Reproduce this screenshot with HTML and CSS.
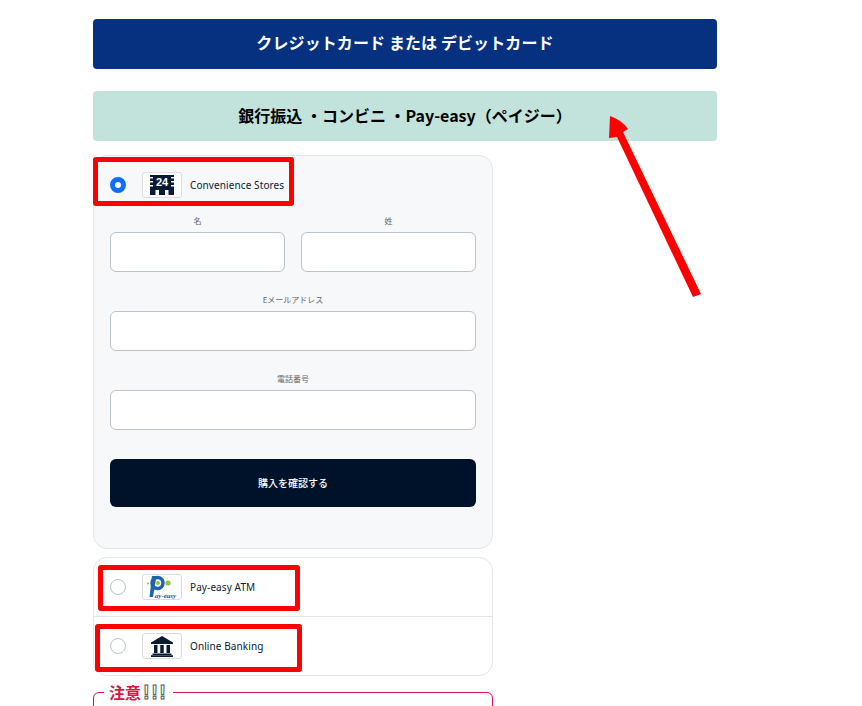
FILE: index.html
```html
<!DOCTYPE html>
<html lang="ja">
<head>
    <meta charset="UTF-8">
    <meta name="viewport" content="width=device-width, initial-scale=1.0">
    <title>お支払い方法</title>
    <link rel="stylesheet" href="styles.css">
</head>
<body>
    <div class="page">
        <div class="tab tab-card">クレジットカード または デビットカード</div>
        <div class="tab tab-bank">銀行振込 ・コンビニ ・Pay-easy（ペイジー）</div>

        <div class="method-box method-open">
            <div class="method-row">
                <span class="radio radio-on"></span>
                <span class="method-logo">
                    <svg width="24" height="20" viewBox="0 0 24 20">
                        <path fill="#0b1a33" d="M0 0h24v20h-5.500v-5h-3.500v5H9v-5H5.500v5H0z"/>
                        <text class="logo-24" x="12" y="10.500" text-anchor="middle">24</text>
                        <path fill="#fff" d="M0 2h3v1.500H0zM0 6h3v1.500H0zM0 10h3v1.500H0zM21 2h3v1.500h-3zM21 6h3v1.500h-3zM21 10h3v1.500h-3z"/>
                    </svg>
                </span>
                <span class="method-name">Convenience Stores</span>
            </div>
            <div class="form">
                <div class="form-pair">
                    <div class="field">
                        <label class="field-label">名</label>
                        <input class="field-input" type="text">
                    </div>
                    <div class="field">
                        <label class="field-label">姓</label>
                        <input class="field-input" type="text">
                    </div>
                </div>
                <div class="field">
                    <label class="field-label">Eメールアドレス</label>
                    <input class="field-input" type="text">
                </div>
                <div class="field">
                    <label class="field-label">電話番号</label>
                    <input class="field-input" type="text">
                </div>
                <button class="confirm" type="button">購入を確認する</button>
            </div>
        </div>

        <div class="method-box method-list">
            <div class="method-row">
                <span class="radio"></span>
                <span class="method-logo">
                    <svg width="38" height="24" viewBox="0 0 38 24">
                        <circle cx="14.500" cy="8" r="5.500" fill="none" stroke="#1d63ad" stroke-width="3.500"/>
                        <path fill="#1d63ad" d="M9 1h4.500L10 22H6.500z"/>
                        <circle cx="15" cy="8" r="2" fill="#8cc63f"/>
                        <circle cx="25" cy="8" r="2.600" fill="#8cc63f"/>
                        <circle cx="5" cy="8.500" r="1" fill="#8cc63f"/>
                        <text class="logo-payeasy" x="22.500" y="22.500" text-anchor="middle">ay-easy</text>
                    </svg>
                </span>
                <span class="method-name">Pay-easy ATM</span>
            </div>
            <div class="method-row">
                <span class="radio"></span>
                <span class="method-logo">
                    <svg width="22" height="21" viewBox="0 0 22 21">
                        <path fill="#0b1a33" d="M11 0l11 6.500V8H0V6.500zM3 9h3.500v8H3zM9.250 9h3.500v8h-3.500zM15.500 9H19v8h-3.500zM1.500 17.500h19V19h-19zM0 19.200h22V21H0z"/>
                    </svg>
                </span>
                <span class="method-name">Online Banking</span>
            </div>
        </div>

        <fieldset class="notice">
            <legend class="notice-title">注意<span class="notice-marks">!!!</span></legend>
        </fieldset>
    </div>

    <!-- annotations drawn over the screenshot -->
    <div class="mark mark-store"></div>
    <div class="mark mark-atm"></div>
    <div class="mark mark-online"></div>
    <svg class="arrow" width="862" height="706" viewBox="0 0 862 706">
        <path fill="#ff0000" d="M610 116Q622 120 628 129L623 132L701 294L693 297L617 137L609 138Z"/>
    </svg>
</body>
</html>
```
FILE: styles.css
```css
html, body {
    margin: 0;
    height: 706px;
    overflow: hidden;
    background: #fff;
}
body {
    font-family: "Noto Sans CJK JP", "Noto Sans", sans-serif;
    position: relative;
}
.page {
    box-sizing: border-box;
    width: 624px;
    height: 706px;
    overflow: hidden;
    margin-left: 93px;
    padding-top: 19px;
}
.tab {
    height: 50px;
    border-radius: 4px;
    text-align: center;
    font-size: 16px;
    font-weight: 700;
}
.tab-card {
    line-height: 47px;
    letter-spacing: 0.1px;
    background: #063180;
    color: #fff;
    margin-bottom: 22px;
}
.tab-bank {
    line-height: 49px;
    background: #c2e3dc;
    color: #000;
    margin-bottom: 14px;
}
.method-box {
    box-sizing: border-box;
    width: 400px;
    border: 1px solid #e3e6e8;
    border-radius: 14px;
}
.method-open {
    height: 394px;
    background: #f7f8fa;
    margin-bottom: 8px;
}
.method-list {
    height: 119px;
    margin-bottom: 6px;
}
.method-row {
    display: flex;
    align-items: center;
    height: 58px;
    padding-left: 16px;
}
.method-list .method-row + .method-row {
    border-top: 1px solid #e3e6e8;
}
.radio {
    box-sizing: border-box;
    width: 16px;
    height: 16px;
    border: 1px solid #b9c4cc;
    border-radius: 50%;
    background: #fff;
    margin-right: 16px;
}
.radio-on {
    border: 5px solid #0d6efd;
}
.method-logo {
    box-sizing: border-box;
    display: flex;
    align-items: center;
    justify-content: center;
    width: 40px;
    height: 26px;
    border: 1px solid #d9dde0;
    border-radius: 3px;
    background: #fff;
    margin-right: 8px;
}
.method-name {
    font-family: "Noto Sans", sans-serif;
    font-size: 10px;
    letter-spacing: 0.1px;
    color: #0b1a33;
}
.logo-24 {
    font-family: "Liberation Sans", sans-serif;
    font-size: 11px;
    font-weight: 700;
    fill: #fff;
}
.logo-payeasy {
    font-family: "Liberation Serif", serif;
    font-size: 7px;
    font-weight: 700;
    font-style: italic;
    fill: #1d4f8f;
}
.form {
    padding: 0 16px;
}
.form-pair {
    display: flex;
    gap: 16px;
}
.form-pair .field {
    flex: 1;
}
.field {
    margin-bottom: 21px;
}
.field-label {
    display: block;
    height: 18px;
    line-height: 13px;
    text-align: center;
    font-size: 8px;
    color: #5f686f;
}
.field-input {
    box-sizing: border-box;
    display: block;
    width: 100%;
    height: 40px;
    border: 1px solid #b9c4cc;
    border-radius: 6px;
    background: #fff;
}
.confirm {
    display: block;
    width: 100%;
    height: 48px;
    margin-top: 29px;
    padding: 0 0 2px;
    border: 0;
    border-radius: 6px;
    background: #001229;
    color: #fff;
    font-family: inherit;
    font-size: 10px;
    font-weight: 500;
}
.notice {
    box-sizing: border-box;
    width: 400px;
    height: 60px;
    margin: 0;
    padding: 0 10px;
    border: 1px solid #dc1446;
    border-radius: 6px;
}
.notice-title {
    margin-left: 0;
    padding: 0 5px;
    font-size: 16px;
    font-weight: 700;
    line-height: 20px;
    color: #dc1446;
}
.notice-marks {
    font-family: "Liberation Sans", sans-serif;
    font-size: 20px;
    font-weight: 700;
    letter-spacing: 1.500px;
    margin-left: 2px;
    color: #fff;
    -webkit-text-stroke: 1px #5a5a5a;
}
.mark {
    position: absolute;
    box-sizing: border-box;
    border: 5px solid #ff0000;
    border-radius: 3px;
}
.mark-store {
    left: 93px;
    top: 157px;
    width: 201px;
    height: 49px;
}
.mark-atm {
    left: 98px;
    top: 565px;
    width: 202px;
    height: 46px;
}
.mark-online {
    left: 95px;
    top: 624px;
    width: 207px;
    height: 48px;
}
.arrow {
    position: absolute;
    left: 0;
    top: 0;
}
```
